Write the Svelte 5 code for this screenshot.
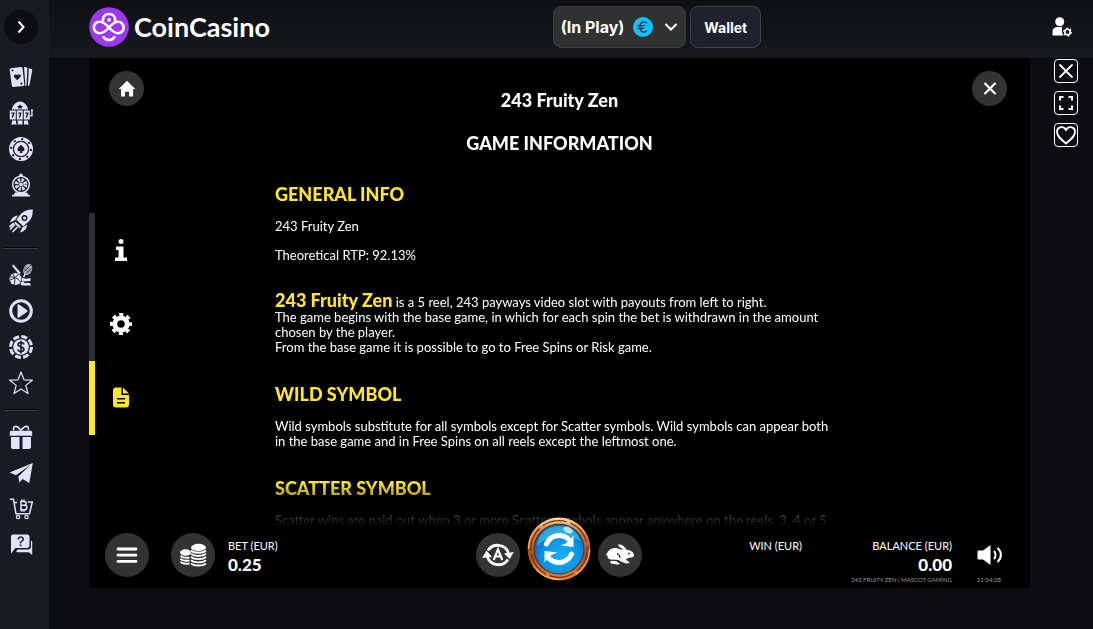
<script lang="ts">
  const groups = [
    ['cards', 'slots', 'chip', 'wheel', 'rocket'],
    ['sports', 'live', 'dollar', 'favourites'],
    ['gift', 'telegram', 'shop', 'support'],
  ];

  const tabs = ['paytable', 'settings', 'rules'];

  let activeTab = $state('rules');
  let liked = $state(false);
</script>

{#snippet navIcon(name: string)}
  <svg viewBox="0 0 24 24" width="24" height="24" fill="currentColor">
    {#if name === 'cards'}
      <path fill-rule="evenodd" d="M2 3.2 12 2a1.4 1.4 0 0 1 1.5 1.2L15.300 19.500a1.400 1.400 0 0 1-1.300 1.500L4.300 22a1.400 1.400 0 0 1-1.500-1.200L.7 4.700A1.400 1.400 0 0 1 2 3.200zM8.300 15.200l3.300-3.500c1.300-1.900-1.700-3.700-3.400-1.700-2-1.600-4.500.7-2.700 2.400zM3 4.600a1 1 0 1 0 1.500 1.200A1 1 0 0 0 3 4.600zm9 13a1 1 0 1 0 1.400 1.200 1 1 0 0 0-1.400-1.200z" />
      <path d="m15 2 2.300.3c.7.100 1.100.6 1.100 1.300l-.9 16.300c0 .8-.6 1.200-1.500 1.100l.3-2zM19.800 3.200l2.500.7c.7.200 1.100.8.9 1.500L20.500 20c-.2.700-.8 1-1.600.8z" />
    {:else if name === 'slots'}
      <path fill-rule="evenodd" d="M3 8.500C3.300 4.500 7 .5 11 .5s7.700 4 8 8zm8-5.200-1 1.400-1.800.5L9.300 6.600l-.1 1.200 1.800-.6 1.800.6-.1-1.200 1.100-1.400-1.800-.5z" />
      <path fill-rule="evenodd" d="M.8 9.500h6v9h-6zm1.500 2v1.300h1.600L2.600 16.500h1.500l1.400-4v-1zM7.800 9.500h6v9h-6zm1.500 2v1.300h1.600l-1.300 3.700h1.500l1.400-4v-1zM14.800 9.500h6v9h-6zm1.500 2v1.300h1.600l-1.300 3.700h1.500l1.400-4v-1z" />
      <path d="M21.300 14h1V10a1 1 0 1 1 1.300 0v5.500h-2.300zM3 19.500h4v2.200l1 1.800H2l1-1.800zM8.500 19.500h5v4H9zM15 19.500h4v2.200l1 1.800h-5z" />
    {:else if name === 'chip'}
      <circle cx="12" cy="12" r="10" fill="none" stroke="currentColor" stroke-width="4" />
      <circle cx="12" cy="12" r="10" fill="none" stroke="#181b23" stroke-width="2" stroke-dasharray="2 5.854" />
      <circle cx="12" cy="12" r="7.700" fill="none" stroke="#181b23" stroke-width="1" />
      <path fill-rule="evenodd" d="M12 5a7 7 0 1 0 0 14 7 7 0 0 0 0-14zm0 2.500c.8 1.700 3.500 2.700 3.500 5 0 1.700-1.900 2.300-2.900 1.200l.8 2.300h-2.800l.8-2.300c-1 1.100-2.900.5-2.900-1.200 0-2.300 2.700-3.300 3.500-5z" />
    {:else if name === 'wheel'}
      <circle cx="12" cy="11.500" r="8.300" fill="none" stroke="currentColor" stroke-width="1.500" />
      <circle cx="12" cy="11.500" r="4.300" fill="none" stroke="currentColor" stroke-width="4" stroke-dasharray="2.100 1.277" />
      <circle cx="12" cy="11.500" r="1.800" />
      <circle cx="12" cy="2.200" r="1.800" />
      <path d="M6 19.500h12l1.500 2.500H21v1.500H3V22h1.500z" />
    {:else if name === 'rocket'}
      <path fill-rule="evenodd" d="M23.700.5c.4 5-1 9.300-4.500 12.500l-5 4.200-6.800-6.500L11.300 5.500C14.500 2 18.700.4 23.700.5zM15.500 6a3 3 0 1 0 0 6 3 3 0 0 0 0-6z" />
      <circle cx="15.500" cy="9" r="1.500" />
      <path d="M9 6.500 6.200 11 1 13.500C2.500 9.500 4.500 7 9 6.500zM18 15.500l-4.500 2.800L11 23.500c5-1.500 7-4 7-8zM6.300 12.500l6 5.600-2 .8-4.800-4.500z" />
      <path d="m5.500 16-4 4M8 18.500l-4 4M4.500 14.500l-3.500 3" stroke="currentColor" stroke-width="1.700" stroke-linecap="round" />
    {:else if name === 'sports'}
      <path d="M3.500 3.500c-.6-1.500.8-2.200 1.600-1.200l6.700 7.500-1.600 1.700z" />
      <ellipse cx="18.700" cy="6.500" rx="4.200" ry="5.900" transform="rotate(25 18.700 6.500)" opacity=".75" />
      <path d="m15.300 2.500 6.500 6M14.600 5l5 5M22 2l-7 6.500M23 5l-6 5.500" stroke="#181b23" stroke-width=".6" />
      <path d="m16 10.800-1.300 3.500" stroke="currentColor" stroke-width="1.500" />
      <circle cx="6.500" cy="16" r="6" />
      <path d="M1 14c4-.5 8 1 10.500 5M4 11c2 3 2.500 7 1 11M9.500 11c-2 3-5 5-8.500 6" fill="none" stroke="#181b23" stroke-width=".9" />
      <path d="M13 14.500c2 1.500 5 1.500 8.500.5v3l-8.500.5zM12 20h9l1 2.500H15l-3-1z" />
      <circle cx="13.500" cy="20.500" r="2" />
    {:else if name === 'live'}
      <circle cx="12" cy="12" r="10.300" fill="none" stroke="currentColor" stroke-width="3" />
      <path d="M8.500 6.300c0-.8.8-1.200 1.500-.8l8 5.500c.8.500.8 1.500 0 2l-8 5.500c-.7.400-1.500 0-1.500-.8z" />
    {:else if name === 'dollar'}
      <circle cx="12" cy="12" r="10.500" fill="none" stroke="currentColor" stroke-width="3" stroke-dasharray="6 2.247" />
      <circle cx="12" cy="12" r="7.800" />
      <path d="M15 9.500c-.5-2.800-6-2.600-6 0 0 3 6 1.800 6 4.800 0 2.800-5.600 3-6.200 0M12 5.800v12.600" fill="none" stroke="#181b23" stroke-width="1.600" />
    {:else if name === 'favourites'}
      <path d="m12 1 3 7.800 8.300.4-6.500 5.200L19 22.500 12 18l-7 4.500 2.200-8.100L.7 9.200 9 8.800z" fill="none" stroke="currentColor" stroke-width="1.200" stroke-linejoin="round" />
    {:else if name === 'gift'}
      <path d="M2.500 5.700h8v5H.8V7.200c0-.8.7-1.500 1.700-1.500zM13.500 5.700h8c1 0 1.700.7 1.700 1.500v3.500h-9.700zM2 12h8.500v12H4c-1.200 0-2-.8-2-2zM13.500 12H22v10c0 1.200-.8 2-2 2h-6.500zM10.500 5.700h3v5h-3z" />
      <path d="M12 5.500C8-.5 3.500.5 4.700 5.200M12 5.500c4-6 8.500-5 7.300-.3" fill="none" stroke="currentColor" stroke-width="1.600" />
    {:else if name === 'telegram'}
      <path d="M23.800 2 20.300 22l-6.700-4-3.300 3.700-1-6.200L21.300 4 7 14.200.5 11.500z" />
    {:else if name === 'shop'}
      <path d="M.8 2.300h3.700L7 16.800h13.500L23.300 5h-4.500M5.200 5.500h3" fill="none" stroke="currentColor" stroke-width="1.500" />
      <path d="M11 4.500h4c3 0 3 3.700 0 3.700h-3.500 4c3.200 0 3.200 4.600 0 4.600H11M12 4.500v8.300M12.800 2.500v2M15 2.500v2M12.800 13v1.800M15 13v1.800" fill="none" stroke="currentColor" stroke-width="1.500" />
      <circle cx="9" cy="20" r="1.700" fill="none" stroke="currentColor" stroke-width="1.200" />
      <circle cx="17.500" cy="20" r="1.700" fill="none" stroke="currentColor" stroke-width="1.200" />
    {:else}
      <path fill-rule="evenodd" d="M4 1.500h14c1.500 0 2.500 1 2.500 2.500v8.500c0 1.500-1 2.500-2.500 2.500H6.500L2 20.500V4c0-1.500.8-2.500 2-2.500zm4.500 5h1.600c0-2.200 3.300-2.100 3.300-.3 0 1.500-2.700 1.400-2.700 4.200h1.600c0-2 2.700-1.900 2.700-4.300 0-4-6.500-3.900-6.500.4zm2.200 5v1.700h1.700v-1.700z" />
      <path d="M22 7.500c.8.300 1.200 1 1.200 1.800v12.700L20 19.200H9c-1 0-1.700-.5-1.700-1.300l1.500-1.400h10c2 0 3.200-1 3.200-3z" />
    {/if}
  </svg>
{/snippet}

<div class="page">
  <aside>
    <button class="toggle" aria-label="Expand menu">
      <svg viewBox="0 0 16 16" width="16" height="16"><path d="m5.500 2.500 5 5.500-5 5.500" fill="none" stroke="#fff" stroke-width="2" /></svg>
    </button>
    {#each groups as group, i}
      {#if i > 0}<hr />{/if}
      {#each group as name}
        <a href="#{name}" aria-label={name}>{@render navIcon(name)}</a>
      {/each}
    {/each}
  </aside>

  <div class="main">
    <header>
      <a class="logo" href="#home">
        <svg viewBox="0 0 40 40" width="40" height="40">
          <circle cx="20" cy="20" r="19.800" fill="#9d38ee" />
          <g fill="none" stroke="#fff" stroke-width="2.600" stroke-linecap="round">
            <path d="M20 20.500C16.500 16.500 13.500 14.800 10.500 14.800a5.700 5.700 0 1 0 0 11.400c3 0 6-1.700 9.500-5.700s6-5.700 9-5.700a5.700 5.700 0 1 1 0 11.400c-3 0-5.500-1.700-9-5.700z" />
            <path d="M14 13c0-4 3-6.500 6.500-6 4 .4 6 3.500 5.700 6.700M14.500 30c2.500 4 8.500 4 11 0" />
          </g>
          <circle cx="20" cy="12.800" r="1.900" fill="#fff" />
        </svg>
        <span>CoinCasino</span>
      </a>
      <div class="wallet-bar">
        <button class="balance-select" aria-haspopup="listbox">
          <span>(In Play)</span>
          <svg viewBox="0 0 20 20" width="20" height="20">
            <circle cx="10" cy="10" r="10" fill="#0fc0fb" />
            <path d="M13.800 6.300C10 3.200 6.700 6 6.700 10s3.300 6.800 7.100 3.700M4.500 8.700h7.300M4.500 11.300h6.500" fill="none" stroke="#15303c" stroke-width="1.300" />
          </svg>
          <svg viewBox="0 0 14 14" width="14" height="14"><path d="m1.500 4 5.500 5.500L12.500 4" fill="none" stroke="#fff" stroke-width="2" /></svg>
        </button>
        <button class="wallet">Wallet</button>
      </div>
      <button class="account" aria-label="Account">
        <svg viewBox="0 0 20 20" width="20" height="20" fill="#fff">
          <circle cx="7.700" cy="4.700" r="4.500" />
          <path d="M.5 18.500v-4c0-3 2-4.500 5-4.500h4.800c-.7 2.800-.5 6 1.200 8.500z" />
          <circle cx="15.500" cy="15" r="2.700" fill="none" stroke="#fff" stroke-width="1.600" />
          <circle cx="15.500" cy="15" r="3.800" fill="none" stroke="#fff" stroke-width="1.200" stroke-dasharray="1.900 2.080" />
        </svg>
      </button>
    </header>

    <div class="stage">
      <section class="game">
        <div class="game-top">
          <button class="round" aria-label="Home">
            <svg viewBox="0 0 18 18" width="18" height="18"><path d="M9 .8 17.300 9h-2.200v7.500h-4v-4.700H7v4.700H3V9H.7z" fill="#fff" /></svg>
          </button>
          <button class="round" aria-label="Close rules">
            <svg viewBox="0 0 18 18" width="18" height="18"><path d="m3.500 3 11 11M14.500 3l-11 11" stroke="#fff" stroke-width="2.200" /></svg>
          </button>
        </div>

        <div class="tabs">
          {#each tabs as tab}
            <button class="tab" class:active={activeTab === tab} aria-label={tab} onclick={() => (activeTab = tab)}>
              <svg viewBox="0 0 24 24" width="24" height="24" fill="currentColor">
                {#if tab === 'paytable'}
                  <circle cx="12" cy="3.500" r="2.500" />
                  <path d="M7 8.500h7.500v11H18v3.500H6v-3.500h3.500V12H7z" />
                {:else if tab === 'settings'}
                  <circle cx="12" cy="12" r="6.200" fill="none" stroke="currentColor" stroke-width="4.800" />
                  <circle cx="12" cy="12" r="9.400" fill="none" stroke="currentColor" stroke-width="3.400" stroke-dasharray="4 3.383" stroke-dashoffset="2" />
                {:else}
                  <path fill-rule="evenodd" d="M7 1.500h5.500V9H20v9.500a3 3 0 0 1-3 3H7a3 3 0 0 1-3-3v-14a3 3 0 0 1 3-3zM8 12v1.600h8V12zm0 4v1.600h8V16z" />
                  <path d="M14 1.500 20 7.500h-6z" />
                {/if}
              </svg>
            </button>
          {/each}
        </div>

        <article>
          <h1>243 Fruity Zen</h1>
          <h2>GAME INFORMATION</h2>
          <h3>GENERAL INFO</h3>
          <p>243 Fruity Zen</p>
          <p>Theoretical RTP: 92.13%</p>
          <p class="intro">
            <strong>243 Fruity Zen</strong> is a 5 reel, 243 payways video slot with payouts from left to right.<br />
            The game begins with the base game, in which for each spin the bet is withdrawn in the amount chosen by the player.<br />
            From the base game it is possible to go to Free Spins or Risk game.
          </p>
          <h3>WILD SYMBOL</h3>
          <p>Wild symbols substitute for all symbols except for Scatter symbols. Wild symbols can appear both in the base game and in Free Spins on all reels except the leftmost one.</p>
          <h3>SCATTER SYMBOL</h3>
          <p>Scatter wins are paid out when 3 or more Scatter symbols appear anywhere on the reels. 3, 4 or 5</p>
        </article>

        <footer>
          <div class="left">
            <button class="round big" aria-label="Menu">
              <svg viewBox="0 0 24 24" width="24" height="24"><path d="M3 6h18M3 12.200h18M3 18.400h18" stroke="#fff" stroke-width="2.800" stroke-linecap="round" /></svg>
            </button>
            <button class="round big" aria-label="Bet">
              <svg viewBox="0 0 28 24" width="28" height="24">
                <g fill="#fff">
                  <ellipse cx="6.500" cy="9.500" rx="5.500" ry="3.200" />
                  <ellipse cx="19.500" cy="4.500" rx="7.500" ry="3.700" />
                </g>
                <g fill="none" stroke="#fff" stroke-width="1.900">
                  <path d="M1.500 12.800c1.500 2 6 2.500 9 1.500M1.500 15.800c1.500 2 6 2.500 9 1.500M1.500 18.800c1.500 2 6 2.500 9 1.500" />
                  <path d="M12 7.500c3 3 12 3 15 0M12 10.700c3 3 12 3 15 0M12 13.900c3 3 12 3 15 0M12 17.100c3 3 12 3 15 0M12 20.300c3 3 12 3 15 0" />
                </g>
              </svg>
            </button>
            <div class="amount">
              <span>BET (EUR)</span>
              <strong>0.25</strong>
            </div>
          </div>

          <div class="center">
            <button class="round big" aria-label="Autoplay">
              <svg viewBox="0 0 32 32" width="32" height="32">
                <path d="M6 11.500a11.500 11.500 0 0 1 20.500 2.500M26 20.500a11.500 11.500 0 0 1-20.500-2.500" fill="none" stroke="#fff" stroke-width="2.800" />
                <path d="m22 14.500 9.800-1.500-4 7zM.2 19l4.300-7.500L10 18z" fill="#fff" />
                <path d="m11.700 21 4.300-10.500L20.300 21M13.500 17.500h5" fill="none" stroke="#fff" stroke-width="2.200" />
              </svg>
            </button>
            <button class="spin" aria-label="Spin">
              <svg viewBox="0 0 64 64" width="64" height="64">
                <defs>
                  <linearGradient id="ring" x1="0" y1="0" x2="0" y2="1">
                    <stop offset="0" stop-color="#ffe2a0" />
                    <stop offset=".2" stop-color="#d98642" />
                    <stop offset=".6" stop-color="#a84d1b" />
                    <stop offset="1" stop-color="#ee8a35" />
                  </linearGradient>
                  <radialGradient id="ball" cx=".55" cy=".65" r=".6">
                    <stop offset="0" stop-color="#15b2f8" />
                    <stop offset=".7" stop-color="#098ee2" />
                    <stop offset="1" stop-color="#0965ad" />
                  </radialGradient>
                </defs>
                <circle cx="32" cy="32" r="31.500" fill="url(#ring)" />
                <circle cx="32" cy="32" r="28.300" fill="none" stroke="#79310e" stroke-width="1.200" stroke-dasharray="25 4" />
                <circle cx="32" cy="32" r="30.500" fill="none" stroke="#ffc478" stroke-width="1" stroke-dasharray="30 18" />
                <circle cx="32" cy="32" r="25.500" fill="#5b2b18" />
                <circle cx="32" cy="32" r="24.500" fill="url(#ball)" />
                <path d="M10 29C11 17 20 9 32 9s20 7 21 15c-12-8-31-7-43 5z" fill="#44cff9" opacity=".6" />
                <ellipse cx="41" cy="13" rx="5" ry="3" fill="#d6f8ff" opacity=".8" transform="rotate(25 41 13)" />
                <path d="M19.500 27c4-9 15-11.500 22.500-4.500M44.500 37c-4 9-15 11.500-22.500 4.500" fill="none" stroke="#fff" stroke-width="5" stroke-linecap="round" />
                <path d="M46.500 18.500V30l-13-1.500c5-1.500 9-4.500 13-10zM17.500 45.500V34l13 1.500c-5 1.500-9 4.500-13 10z" fill="#fff" />
              </svg>
            </button>
            <button class="round big" aria-label="Turbo">
              <svg viewBox="0 0 30 24" width="30" height="24" fill="#fff">
                <path d="M13 1.800c3-1.500 7 1.700 8.500 5 4 .2 7.500 2.700 7.500 5.500 0 2-3 2.600-6 2.600l-2.500 2 3 1.300c1.500.8.8 2.300-.8 2.300-3 0-6.500-2-9.200-3.500L6 16.500c-2.500 0-4-1.800-3.500-4C1 13 .5 11.200 2 10.500c1.500-4.500 8-7 12.500-4.200l4 .5c-2-2-5-2.500-5.500-5z" />
                <path d="M6 18h5l4 2.800c-1 1.500-4.500.2-7 .2-2.500-.2-3.500-2.200-2-3z" />
                <path d="M12 10.500c2 1 3 2.700 3 4.500" fill="none" stroke="#333" stroke-width="1.200" />
                <circle cx="24" cy="10.500" r="1" fill="#333" />
              </svg>
            </button>
          </div>

          <div class="right">
            <div class="amount">
              <span>WIN (EUR)</span>
              <strong></strong>
            </div>
            <div class="amount end">
              <span>BALANCE (EUR)</span>
              <strong>0.00</strong>
              <small>243 FRUITY ZEN | MASCOT GAMING</small>
            </div>
            <div class="sound">
              <button aria-label="Sound">
                <svg viewBox="0 0 26 22" width="26" height="22">
                  <path d="M1.500 6.500H6L13.500 1v20L6 15.500H1.500a1 1 0 0 1-1-1v-7a1 1 0 0 1 1-1z" fill="#fff" />
                  <path d="M17 7c2 2 2 6 0 8M20.500 4c4.500 4 4.500 10 0 14" fill="none" stroke="#fff" stroke-width="2" />
                </svg>
              </button>
              <small>21:54:28</small>
            </div>
          </div>
        </footer>
      </section>

      <div class="tools">
        <button aria-label="Close game">
          <svg viewBox="0 0 22 22" width="22" height="22"><path d="m5 5 12 12M17 5 5 17" stroke="#fff" stroke-width="1.800" stroke-linecap="round" /></svg>
        </button>
        <button aria-label="Full screen">
          <svg viewBox="0 0 22 22" width="22" height="22"><path d="M5 8.500V5h3.500M13.500 5H17v3.500M17 13.500V17h-3.500M8.500 17H5v-3.500" fill="none" stroke="#fff" stroke-width="2" /></svg>
        </button>
        <button aria-label="Add to favourites" aria-pressed={liked} onclick={() => (liked = !liked)}>
          <svg viewBox="0 0 22 22" width="22" height="22"><path d="M11 19.500C5 14.500 2 11.800 2 8c0-5.500 6.500-6.500 9-2 2.500-4.500 9-3.500 9 2 0 3.800-3 6.500-9 11.500z" fill={liked ? '#fff' : 'none'} stroke="#fff" stroke-width="1.800" /></svg>
        </button>
      </div>
    </div>
  </div>
</div>

<style>
  :global(body) {
    margin: 0;
    background: #0c0d11;
    color: #fff;
  }

  button {
    display: flex;
    align-items: center;
    justify-content: center;
    padding: 0;
    border: 0;
    background: none;
    color: inherit;
    font: inherit;
    cursor: pointer;
  }

  svg {
    display: block;
    flex: none;
  }

  .page {
    display: flex;
    min-height: 100vh;
  }

  aside {
    display: flex;
    flex-direction: column;
    flex: none;
    padding: 10px 11px 0 4px;
    background: #181b23;
  }

  aside a {
    display: flex;
    align-items: center;
    justify-content: center;
    height: 36px;
    color: #e2e2fb;
  }

  aside hr {
    width: 100%;
    height: 1px;
    margin: 8px 0;
    border: 0;
    border-top: 1px solid #050608;
    background: #3a3d4c;
  }

  .toggle {
    width: 34px;
    height: 34px;
    margin-bottom: 15px;
    border-radius: 50%;
    background: #0c0d10;
  }

  .main {
    flex: 1;
    min-width: 0;
  }

  header {
    display: flex;
    align-items: flex-start;
    justify-content: space-between;
    padding: 6px 13px 10px 40px;
    border-bottom: 1px solid #060709;
    background: linear-gradient(#0e1014, #15181d);
  }

  .logo {
    display: flex;
    align-items: center;
    gap: 5px;
    height: 42px;
    color: #fff;
    font: 700 27px/40px Lato, sans-serif;
    text-decoration: none;
  }

  .wallet-bar {
    display: flex;
    gap: 4px;
    font-family: Inter, sans-serif;
    font-weight: 700;
  }

  .wallet-bar button {
    box-sizing: border-box;
    height: 42px;
    border: 1px solid #3d4052;
    border-radius: 8px;
  }

  .wallet-bar .balance-select {
    gap: 9px;
    padding: 0 7px;
    border-color: #3a3c42;
    background: #303131;
    font-size: 16px;
  }

  .balance-select svg:last-child {
    margin-left: 2px;
  }

  .wallet-bar .wallet {
    padding: 0 13px;
    background: #1f212c;
    font-size: 14px;
  }

  .account {
    width: 36px;
    height: 42px;
  }

  .stage {
    display: flex;
    gap: 24px;
    padding: 0 15px 0 40px;
  }

  .game {
    display: grid;
    flex: 1;
    grid-template: minmax(0, 1fr) auto / 58px minmax(0, 1fr) 58px;
    min-width: 0;
    aspect-ratio: 16 / 9;
    background: #000;
    font-family: Lato, sans-serif;
  }

  .game-top {
    display: flex;
    grid-area: 1 / 1 / 2 / 4;
    align-self: start;
    justify-content: space-between;
    padding: 12px 23px 0 20px;
  }

  .round {
    width: 35px;
    height: 35px;
    border-radius: 50%;
    background: #333;
  }

  .big {
    width: 44px;
    height: 44px;
  }

  .tabs {
    grid-area: 1 / 1 / 3 / 2;
    align-self: center;
  }

  .tab {
    width: 100%;
    height: 74px;
    border-left: 6px solid #2e2b35;
  }

  .active {
    border-color: #ffe81f;
    color: #ffe81f;
  }

  article {
    grid-area: 1 / 2 / 2 / 3;
    justify-self: center;
    width: 569px;
    max-width: 100%;
    overflow: hidden;
    font-size: 13px;
    line-height: 15px;
    mask-image: linear-gradient(#000 calc(100% - 48px), transparent calc(100% - 4px));
  }

  h1,
  h2,
  h3 {
    margin: 0;
    font-size: 18px;
    font-weight: 900;
    line-height: 22px;
    text-align: center;
  }

  h1 {
    margin-top: 30px;
  }

  h2 {
    margin: 21px 0 29px;
  }

  h3 {
    margin: 28px 0 14px;
    color: #ffe62b;
    text-align: left;
  }

  p {
    margin: 0 0 14px;
    padding-right: 12px;
  }

  .intro {
    margin: 27px 0 0;
  }

  .intro strong {
    color: #ffe62b;
    font-size: 18px;
    font-weight: 900;
    line-height: 20px;
  }

  /* the spin button rises over the fading end of the rules */
  footer {
    display: grid;
    grid-area: 2 / 1 / 3 / 4;
    grid-template-columns: 1fr auto 1fr;
    align-items: end;
    margin-top: -14px;
    padding: 0 27px 0 16px;
  }

  .left,
  .center,
  .right {
    display: flex;
    align-items: flex-end;
    padding-bottom: 11px;
  }

  .left {
    gap: 22px;
  }

  .left .amount {
    align-self: center;
    margin-left: -9px;
    padding-top: 3px;
  }

  .center {
    gap: 7px;
    margin-left: 10px;
  }

  .spin {
    margin-bottom: -4px;
    border-radius: 50%;
  }

  .right {
    align-items: flex-start;
    justify-content: flex-end;
    padding-bottom: 4px;
  }

  .amount {
    display: flex;
    flex-direction: column;
    font-size: 11px;
    line-height: 16px;
  }

  .amount strong {
    min-height: 22px;
    font-size: 17px;
    font-weight: 900;
    line-height: 22px;
  }

  .end {
    align-items: flex-end;
    margin: 0 25px 0 49px;
  }

  small {
    color: #999;
    font-size: 6px;
    line-height: 8px;
  }

  .sound {
    display: flex;
    flex-direction: column;
    align-items: flex-start;
    gap: 4px;
  }

  .sound button {
    height: 34px;
  }

  .tools {
    display: flex;
    flex-direction: column;
    gap: 8px;
  }

  .tools button {
    width: 24px;
    height: 24px;
    border: 1px solid #fff;
    border-radius: 4px;
  }
</style>
